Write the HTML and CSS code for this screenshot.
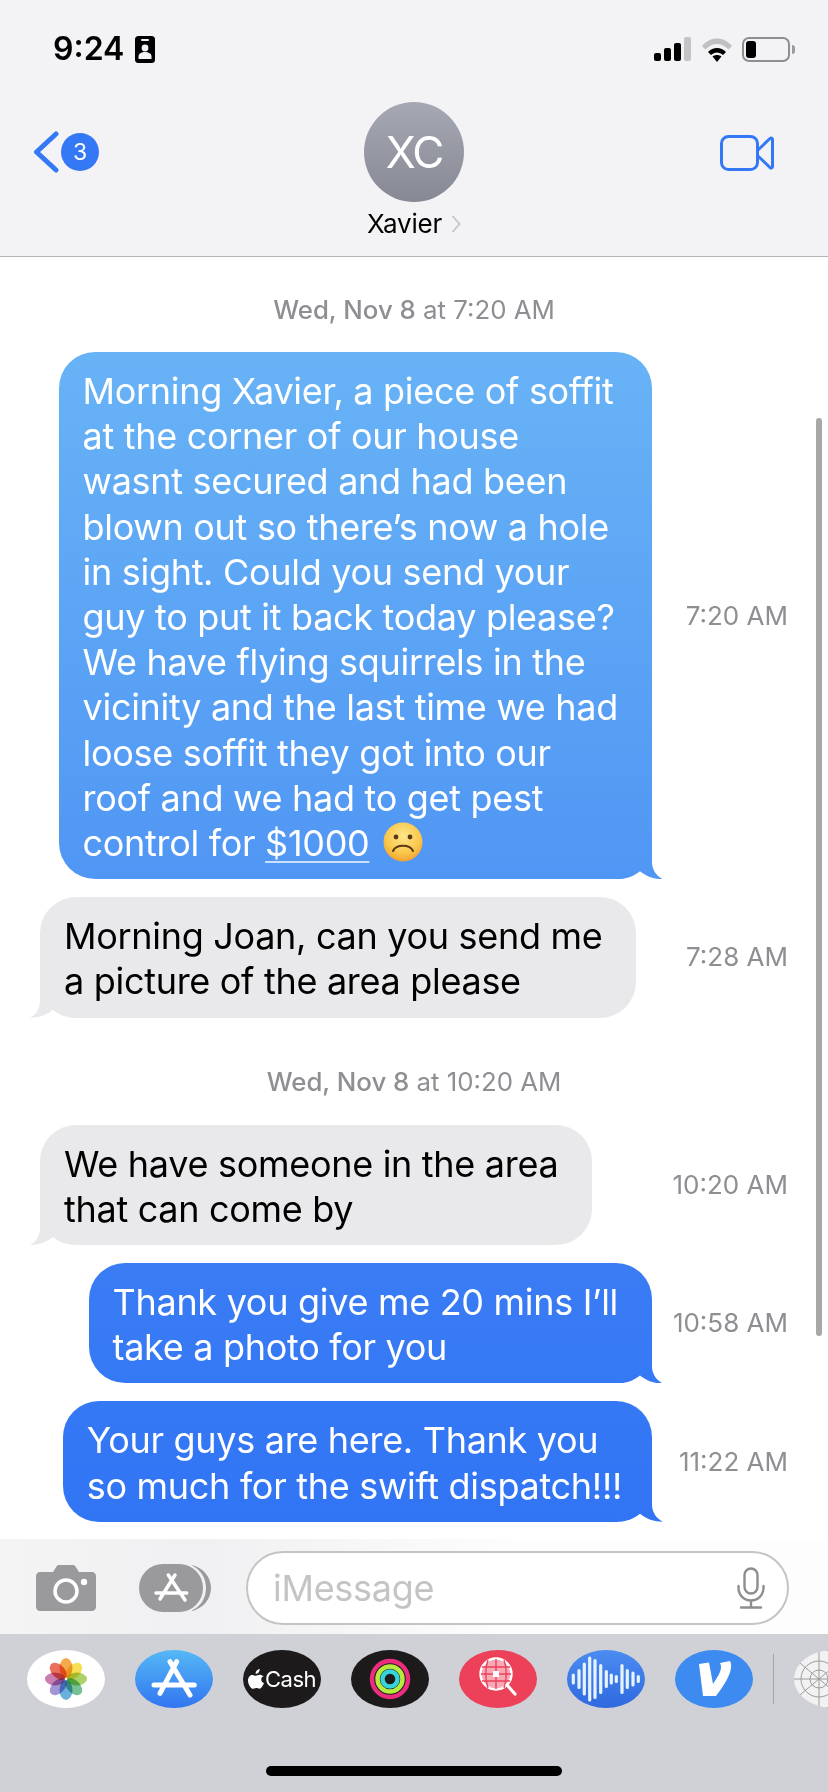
FILE: index.html

```html
<!DOCTYPE html>
<html lang="en">
  <head>
    <meta charset="UTF-8" />
    <meta name="viewport" content="width=device-width, initial-scale=1.0" />
    <title>Xavier</title>
    <link rel="stylesheet" href="styles.css">
  </head>
  <body>
    <div class="phone">
      <header class="top">
        <div class="status">
          <div class="clock">
            <span>9:24</span>
            <svg class="id-icon" viewBox="0 0 20 27"><rect width="20" height="27" rx="3.5" fill="#000"/><rect x="6" y="3" width="8" height="2" rx="1" fill="#f3f3f5"/><circle cx="10" cy="12" r="3.4" fill="#f3f3f5"/><path d="M3.5 23v-2.500c0-3 3-4.500 6.500-4.500s6.500 1.500 6.500 4.500V23z" fill="#f3f3f5"/></svg>
          </div>
          <div class="sys">
            <svg class="signal" viewBox="0 0 37 24"><rect x="0" y="16" width="7" height="8" rx="2" fill="#000"/><rect x="10" y="11" width="7" height="13" rx="2" fill="#000"/><rect x="20" y="6" width="7" height="18" rx="2" fill="#000"/><rect x="30" y="0" width="7" height="24" rx="2" fill="#c4c4c6"/></svg>
            <svg class="wifi" viewBox="0 0 32 25"><path d="M1 9C9-1 23-1 31 9l-3.500 3.500C21 5 11 5 4.500 12.500z" fill="#c0c0c2"/><path d="M7 15c5-5.500 13-5.500 18 0l-3 3c-3.500-3.500-8.500-3.500-12 0z" fill="#000"/><path d="M11.500 19.500c2.500-2 6.500-2 9 0L16 25z" fill="#000"/></svg>
            <div class="battery"><div class="battery-fill"></div></div>
            <div class="battery-nub"></div>
          </div>
        </div>
        <div class="nav">
          <div class="back">
            <svg class="chevron" viewBox="0 0 26 42"><path d="M23 3 3.500 21 23 39" fill="none" stroke="#3478f6" stroke-width="5" stroke-linecap="round" stroke-linejoin="round"/></svg>
            <div class="badge">3</div>
          </div>
          <div class="contact">
            <div class="avatar">XC</div>
            <div class="name">Xavier <svg class="name-arrow" viewBox="0 0 10 18"><path d="m1.500 1 7 8-7 8" fill="none" stroke="#c4c4c8" stroke-width="1.800"/></svg></div>
          </div>
          <svg class="video" viewBox="0 0 54 36"><rect x="1.500" y="1.500" width="36" height="33" rx="7" fill="none" stroke="#3478f6" stroke-width="3"/><path d="M38 15 50 3.500c1.200-1 2.500-.5 2.500 1v27c0 1.500-1.300 2-2.500 1L38 21" fill="none" stroke="#3478f6" stroke-width="3" stroke-linejoin="round"/></svg>
        </div>
      </header>

      <main class="chat">
        <div class="scrollbar"></div>
        <p class="stamp first"><b>Wed, Nov 8</b> at 7:20 AM</p>

        <div class="row out">
          <div class="bubble sent">
            Morning Xavier, a piece of soffit<br>
            at the corner of our house<br>
            wasnt secured and had been<br>
            blown out so there’s now a hole<br>
            in sight. Could you send your<br>
            guy to put it back today please?<br>
            We have flying squirrels in the<br>
            vicinity and the last time we had<br>
            loose soffit they got into our<br>
            roof and we had to get pest<br>
            control for <u>$1000</u>
            <svg class="emoji" viewBox="0 0 40 40"><defs><radialGradient id="face" cx="50%" cy="35%" r="70%"><stop offset="0" stop-color="#fde58a"/><stop offset="0.6" stop-color="#fbc94e"/><stop offset="1" stop-color="#ef9a2a"/></radialGradient></defs><circle cx="20" cy="20" r="19.500" fill="url(#face)"/><circle cx="13" cy="15" r="2.400" fill="#5a3a14"/><circle cx="27" cy="15" r="2.400" fill="#5a3a14"/><path d="M10 29c3-7 17-7 20 0" fill="none" stroke="#5a3a14" stroke-width="2" stroke-linecap="round"/></svg>
          </div>
          <time class="when">7:20 AM</time>
        </div>

        <div class="row in">
          <div class="bubble got">
            Morning Joan, can you send me<br>
            a picture of the area please
          </div>
          <time class="when">7:28 AM</time>
        </div>

        <p class="stamp second"><b>Wed, Nov 8</b> at 10:20 AM</p>

        <div class="row in">
          <div class="bubble got">
            We have someone in the area<br>
            that can come by
          </div>
          <time class="when">10:20 AM</time>
        </div>

        <div class="row out">
          <div class="bubble sent">
            Thank you give me 20 mins I’ll<br>
            take a photo for you
          </div>
          <time class="when">10:58 AM</time>
        </div>

        <div class="row out">
          <div class="bubble sent tight">
            Your guys are here. Thank you<br>
            so much for the swift dispatch!!!
          </div>
          <time class="when">11:22 AM</time>
        </div>
      </main>

      <div class="composer">
        <svg class="camera" viewBox="0 0 60 46"><path d="M4 7h13l3.500-5.500C21 .6 22 0 23 0h14c1 0 2 .6 2.500 1.500L43 7h13c2.200 0 4 1.800 4 4v31c0 2.200-1.800 4-4 4H4c-2.200 0-4-1.800-4-4V11c0-2.200 1.800-4 4-4z" fill="#9a9a9c"/><circle cx="30" cy="26" r="11" fill="none" stroke="#fff" stroke-width="3.500"/><circle cx="48" cy="17" r="3.200" fill="#fff"/></svg>
        <svg class="apps" viewBox="0 0 73 48"><path d="M52 1c12 2 20 12 20 23S64 45 52 47c9-4 15-12 15-23S61 5 52 1z" fill="#9a9a9c"/><rect x="0" y="0" width="64" height="48" rx="24" fill="#9a9a9c"/><path d="M36 11 21 35M29.300 11 46 36M17 29h30.700" fill="none" stroke="#fff" stroke-width="3.500" stroke-linecap="round"/></svg>
        <div class="field">
          <span class="placeholder">iMessage</span>
          <svg class="mic" viewBox="0 0 28 42"><rect x="7.500" y="1.500" width="13" height="25" rx="6.500" fill="none" stroke="#8e8e90" stroke-width="2.400"/><path d="M1.500 19v2c0 7 5.500 12.500 12.500 12.500S26.500 28 26.500 21v-2M14 34v6M4 40.500h20" fill="none" stroke="#8e8e90" stroke-width="2.400" stroke-linecap="round"/></svg>
        </div>
      </div>

      <footer class="dock">
        <div class="tray">
          <div class="pill photos">
            <svg viewBox="0 0 42 42" class="flower">
              <ellipse class="petal" cx="21" cy="10" rx="6.500" ry="10" fill="#f3a03a"/>
              <ellipse class="petal" cx="21" cy="10" rx="6.500" ry="10" fill="#f5dc45" transform="rotate(45 21 21)"/>
              <ellipse class="petal" cx="21" cy="10" rx="6.500" ry="10" fill="#a3cf5a" transform="rotate(90 21 21)"/>
              <ellipse class="petal" cx="21" cy="10" rx="6.500" ry="10" fill="#66b98a" transform="rotate(135 21 21)"/>
              <ellipse class="petal" cx="21" cy="10" rx="6.500" ry="10" fill="#5aa8d8" transform="rotate(180 21 21)"/>
              <ellipse class="petal" cx="21" cy="10" rx="6.500" ry="10" fill="#9a8bd0" transform="rotate(225 21 21)"/>
              <ellipse class="petal" cx="21" cy="10" rx="6.500" ry="10" fill="#c46fa6" transform="rotate(270 21 21)"/>
              <ellipse class="petal" cx="21" cy="10" rx="6.500" ry="10" fill="#e8604a" transform="rotate(315 21 21)"/>
            </svg>
          </div>
          <div class="pill store">
            <svg viewBox="0 0 78 58" class="fill-mark"><path d="M41.700 11.700 25 43.300M35 11.700 55 45M19 35h40.300" fill="none" stroke="#fff" stroke-width="5" stroke-linecap="round"/></svg>
          </div>
          <div class="pill cash">
            <svg viewBox="0 0 16 20" class="apple"><path d="M11.700 0c.1 1.300-.4 2.500-1.100 3.400-.8.900-1.900 1.500-3 1.400-.1-1.200.5-2.500 1.200-3.300C9.600.6 10.800 0 11.700 0zM15.500 6.700c-1.600 1-2.200 2.300-2.200 3.700 0 1.700 1 3.100 2.700 3.700-.8 2.300-2.700 5.700-4.600 5.700-1.100 0-1.700-.7-3.100-.7s-2 .7-3.100.7C3 19.800 0 15.600 0 11.400c0-3.500 2.300-5.500 4.500-5.500 1.400 0 2.500.9 3.500.9.900 0 2.200-1 3.700-1 1.100 0 2.700.4 3.800 1.900z" fill="#fff"/></svg>
            <span>Cash</span>
          </div>
          <div class="pill activity">
            <svg viewBox="0 0 42 42" class="rings"><circle cx="21" cy="21" r="18" fill="none" stroke="#ea2d7e" stroke-width="4.500"/><circle cx="21" cy="21" r="12.500" fill="none" stroke="#b7ec3c" stroke-width="4.500"/><circle cx="21" cy="21" r="7.500" fill="none" stroke="#36d3d9" stroke-width="4.500"/></svg>
          </div>
          <div class="pill search">
            <svg viewBox="0 0 78 58" class="fill-mark"><circle cx="37" cy="24" r="15.500" fill="#f8a9b5" stroke="#fff" stroke-width="2.400"/><path d="M29 10c-3 8-3 20 0 28M37 9v30M45 10c3 8 3 20 0 28M23 17h28M22 24h30M23 31h28" fill="none" stroke="#ed4059" stroke-width="1.400"/><rect x="34" y="21" width="6" height="6" fill="#fff"/><path d="m48 35 8 9" stroke="#fff" stroke-width="3.200" stroke-linecap="round"/></svg>
          </div>
          <div class="pill audio">
            <svg viewBox="0 0 78 58" class="fill-mark"><path d="M6.300 25v8M12 20.500v17M17.300 14v30M22.700 8v42M28 10.500v37M33.700 15.500v27M39.300 21.500v15M44.300 25v8M49.300 26.500v5M55 15.500v27M60.300 20.500v17M66 23v12M71.300 26.500v5" fill="none" stroke="#e6f3ff" stroke-width="3.200" stroke-linecap="round"/></svg>
          </div>
          <div class="pill venmo">
            <svg viewBox="0 0 78 58" class="fill-mark"><path d="M24 14 34 12.500 38 34C42 28 46 22 46 17 46 15 45.500 14 45 13L55 11C56 13 56.500 15 56 18 55 26 48 37 41 46H28z" fill="#fff"/></svg>
          </div>
          <div class="tray-line"></div>
          <div class="pill next">
            <svg viewBox="0 0 78 58" class="fill-mark"><g fill="none" stroke="#9a9a9c" stroke-width="1"><circle cx="25" cy="29" r="9"/><circle cx="25" cy="29" r="18"/><circle cx="25" cy="29" r="30"/><path d="M25 0v58M0 29h60M0 8l50 42M0 50 50 8"/></g></svg>
          </div>
        </div>
        <div class="home-bar"></div>
      </footer>
    </div>
  </body>
</html>
```

FILE: styles.css

```css
/* page */
body {
  margin: 0;
  background-color: #fff;
  font-family: Inter, "Liberation Sans", sans-serif;
}

.phone {
  width: 828px;
  height: 1792px;
  display: flex;
  flex-direction: column;
  overflow: hidden;
}

/* header */
.top {
  height: 256px;
  flex: none;
  background-color: #f3f3f5;
  border-bottom: 1px solid #b4b4b6;
}

.status {
  height: 100px;
  padding: 36px 33px 0 53px;
  box-sizing: border-box;
  display: flex;
  justify-content: space-between;
}

.clock {
  display: flex;
  align-items: flex-start;
  gap: 11px;
  font-size: 32px;
  font-weight: 600;
  line-height: 26px;
  color: #000;
}

.id-icon {
  width: 20px;
  height: 27px;
}

.sys {
  display: flex;
  align-items: flex-start;
  padding-top: 1px;
}

.signal {
  width: 37px;
  height: 24px;
}

.wifi {
  width: 32px;
  height: 25px;
  margin-left: 10px;
}

.battery {
  width: 48px;
  height: 25px;
  margin-left: 9px;
  box-sizing: border-box;
  border: 2px solid #8e8e90;
  border-radius: 7px;
  padding: 2px;
}

.battery-fill {
  width: 10px;
  height: 100%;
  background-color: #000;
  border-radius: 3px;
}

.battery-nub {
  width: 3px;
  height: 9px;
  margin: 8px 0 0 2px;
  background-color: #9a9a9c;
  border-radius: 0 3px 3px 0;
}

.nav {
  height: 155px;
  padding: 0 33px;
  display: grid;
  grid-template-columns: 1fr auto 1fr;
  align-items: start;
}

.back {
  display: flex;
  align-items: center;
  gap: 2px;
  margin-top: 31px;
}

.chevron {
  width: 26px;
  height: 42px;
}

.badge {
  width: 38px;
  height: 38px;
  border-radius: 50%;
  background-color: #3478f6;
  color: #fff;
  font-size: 23px;
  line-height: 38px;
  text-align: center;
}

.contact {
  display: flex;
  flex-direction: column;
  align-items: center;
  margin-top: 2px;
}

.avatar {
  width: 100px;
  height: 100px;
  border-radius: 50%;
  background: linear-gradient(#a6a9b4, #868993);
  color: #fff;
  font-size: 44px;
  letter-spacing: -2px;
  line-height: 100px;
  text-align: center;
}

.name {
  margin-top: 5px;
  font-size: 26px;
  letter-spacing: -0.2px;
  line-height: 34px;
  color: #000;
  display: flex;
  align-items: center;
  gap: 9px;
}

.name-arrow {
  width: 10px;
  height: 18px;
}

.video {
  width: 54px;
  height: 36px;
  justify-self: end;
  margin: 35px 21px 0 0;
}

/* messages */
.chat {
  flex: 1;
  min-height: 0;
  position: relative;
  overflow: hidden;
  font-size: 36px;
  letter-spacing: -0.3px;
  line-height: 45.2px;
}

.scrollbar {
  position: absolute;
  left: 816px;
  top: 161px;
  width: 6px;
  height: 918px;
  background-color: #a8a8aa;
  border-radius: 3px;
}

.stamp {
  margin: 0;
  text-align: center;
  font-size: 25.8px;
  letter-spacing: 0;
  line-height: 30px;
  color: #8e8e93;
}

.stamp b {
  font-weight: 500;
}

.first {
  margin-top: 38px;
  margin-bottom: 27px;
}

.second {
  margin-top: 49px;
  margin-bottom: 28px;
}

.row {
  display: flex;
  align-items: center;
  margin-bottom: 18px;
  padding: 0 40px;
}

.out {
  justify-content: flex-end;
}

.bubble {
  position: relative;
  isolation: isolate;
  padding: 17px 34px 13px 24px;
  border-radius: 36px;
  white-space: nowrap;
}

.tight {
  padding-right: 30px;
}

.sent {
  color: #fff;
  background: linear-gradient(#68b3f6 352px, #5096f4 880px, #3a7cf4 1262px, #3175f5 1520px) fixed;
}

.sent u {
  text-decoration-color: rgba(255, 255, 255, 0.7);
  text-decoration-thickness: 2px;
  text-underline-offset: 5px;
}

.got {
  color: #000;
  background-color: #e9e9eb;
}

/* the tail sits behind the text, over the bubble's lower corner */
.bubble::after {
  content: "";
  position: absolute;
  z-index: -1;
  bottom: 0;
  width: 47px;
  height: 37px;
  background: inherit;
}

.sent::after {
  right: -11px;
  clip-path: path("M0 0H36V20C36 28 41 34 47 37C38 37 30 34 24 29C18 34 10 37 0 37Z");
}

.got::after {
  left: -10px;
  clip-path: path("M47 0H10V20C10 28 6 34 0 37C9 37 17 34 23 29C29 34 37 37 47 37Z");
}

.emoji {
  width: 40px;
  height: 40px;
  vertical-align: -6px;
  margin-left: 4px;
}

.when {
  width: 136px;
  flex: none;
  text-align: right;
  font-size: 26px;
  letter-spacing: 0;
  line-height: 30px;
  color: #8e8e93;
}

.in .when {
  margin-left: auto;
  width: auto;
}

/* input */
.composer {
  height: 95px;
  flex: none;
  box-sizing: border-box;
  background: linear-gradient(to right, #f4f4f5, #f0f0f2 200px, #fdfdfd 520px);
  display: flex;
  align-items: center;
  padding: 3px 39px 0 36px;
}

.camera {
  width: 60px;
  height: 46px;
}

.apps {
  width: 73px;
  height: 48px;
  margin-left: 43px;
}

.field {
  flex: 1;
  height: 74px;
  margin-left: 34px;
  box-sizing: border-box;
  border: 2px solid #c4c4c6;
  border-radius: 37px;
  background-color: #fff;
  display: flex;
  align-items: center;
  justify-content: space-between;
  padding: 0 22px 0 25px;
}

.placeholder {
  font-size: 36px;
  letter-spacing: -0.3px;
  color: #c4c4c6;
}

.mic {
  width: 28px;
  height: 42px;
}

/* app tray */
.dock {
  height: 158px;
  flex: none;
  background-color: #d0d1d6;
  padding-top: 16px;
  box-sizing: border-box;
}

.tray {
  display: flex;
  align-items: center;
  gap: 30px;
  padding-left: 27px;
  white-space: nowrap;
}

.pill {
  width: 78px;
  height: 58px;
  flex: none;
  border-radius: 39px / 29px;
  display: flex;
  align-items: center;
  justify-content: center;
  overflow: hidden;
}

.fill-mark {
  width: 78px;
  height: 58px;
  flex: none;
}

.photos {
  background-color: #fff;
}

.flower {
  width: 42px;
  height: 42px;
}

.petal {
  mix-blend-mode: multiply;
  opacity: 0.9;
}

.store {
  background: linear-gradient(#55b8f6, #3175f0);
}

.cash {
  background-color: #1c1a1a;
  color: #fff;
  font-size: 22px;
  letter-spacing: -0.5px;
  gap: 1px;
}

.apple {
  width: 16px;
  height: 20px;
  flex: none;
}

.activity {
  background-color: #1c1a1a;
}

.rings {
  width: 42px;
  height: 42px;
}

.search {
  background-color: #ed4059;
}

.audio {
  background: linear-gradient(#4a8cf0, #3069df);
}

.venmo {
  background-color: #3d8bf1;
}

.tray-line {
  width: 1px;
  height: 50px;
  flex: none;
  margin: 0 -10px;
  background-color: #a5a5a8;
}

.next {
  background-color: #f2f2f2;
  justify-content: flex-start;
}

.home-bar {
  width: 296px;
  height: 10px;
  margin: 58px auto 0;
  background-color: #000;
  border-radius: 5px;
}
```
